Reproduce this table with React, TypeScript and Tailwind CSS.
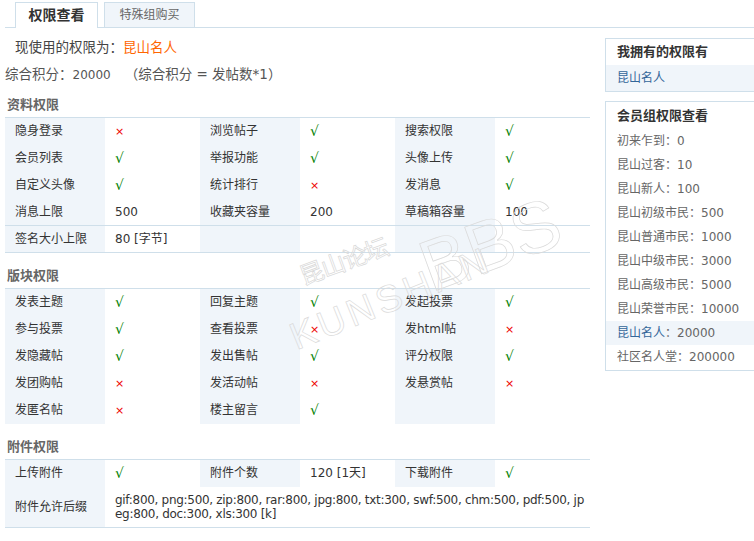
type Cell = string | "yes" | "no" | "";

const font = "font-['DejaVu_Sans','Noto_Sans_CJK_SC',sans-serif]";

const Yes = () => <span className="text-[14px] text-[#008000]">√</span>;
const No = () => <span className="text-[11px] text-[#e00]">×</span>;

const Value = ({ v }: { v: Cell }) => {
  if (v === "yes") return <Yes />;
  if (v === "no") return <No />;
  return <span>{v}</span>;
};

const profileRows: Cell[][] = [
  ["隐身登录", "no", "浏览帖子", "yes", "搜索权限", "yes"],
  ["会员列表", "yes", "举报功能", "yes", "头像上传", "yes"],
  ["自定义头像", "yes", "统计排行", "no", "发消息", "yes"],
  ["消息上限", "500", "收藏夹容量", "200", "草稿箱容量", "100"],
  ["签名大小上限", "80 [字节]", "", "", "", ""],
];

const forumRows: Cell[][] = [
  ["发表主题", "yes", "回复主题", "yes", "发起投票", "yes"],
  ["参与投票", "yes", "查看投票", "no", "发html帖", "no"],
  ["发隐藏帖", "yes", "发出售帖", "yes", "评分权限", "yes"],
  ["发团购帖", "no", "发活动帖", "no", "发悬赏帖", "no"],
  ["发匿名帖", "no", "楼主留言", "yes", "", ""],
];

const groups = [
  ["初来乍到", "0"],
  ["昆山过客", "10"],
  ["昆山新人", "100"],
  ["昆山初级市民", "500"],
  ["昆山普通市民", "1000"],
  ["昆山中级市民", "3000"],
  ["昆山高级市民", "5000"],
  ["昆山荣誉市民", "10000"],
  ["昆山名人", "20000"],
  ["社区名人堂", "200000"],
];

const Row = ({ cells }: { cells: Cell[] }) => (
  <div className="grid grid-cols-[100px_95px_100px_95px_100px_95px] h-[27px] border-b border-[#cfdfea] leading-[26px]">
    {cells.map((c, i) => (
      <div key={i} className={`pl-[10px] ${i % 2 === 0 ? "bg-[#f0f5fa]" : "bg-white"}`}>
        <Value v={c} />
      </div>
    ))}
  </div>
);

const Section = ({ title, first }: { title: string; first?: boolean }) => (
  <div className={`${first ? "mt-[8px]" : "mt-[10px]"} h-[25px] leading-[25px] pl-[2px] font-bold text-[#666] text-[13px]`}>
    {title}
  </div>
);

// faint forum watermark lying over the tables
const Watermark = () => (
  <div className="pointer-events-none absolute left-[280px] top-[180px] w-[280px] h-[150px] select-none">
    <div className="absolute left-[18px] top-[64px] -rotate-[20deg] text-[24px] text-transparent [-webkit-text-stroke:0.7px_#d8d8d8] tracking-[-1px]">
      昆山论坛
    </div>
    <div className="absolute left-[4px] top-[90px] -rotate-[22deg] text-[38px] text-transparent [-webkit-text-stroke:0.7px_#dadada] tracking-[4px] font-['Liberation_Sans',sans-serif]">
      KUNSHAN
    </div>
    <div className="absolute left-[138px] top-[10px] -rotate-[20deg] text-[72px] text-transparent [-webkit-text-stroke:0.7px_#dadada] font-['Liberation_Sans',sans-serif]">
      BBS
    </div>
  </div>
);

export default function App() {
  return (
    <div className={`relative w-[754px] h-[541px] overflow-hidden bg-white text-[12px] text-[#333] ${font}`}>
      {/* tabs */}
      <div className="ml-[5px] h-[28px] border-b border-[#cfdfea] flex items-end pl-[10px] gap-[6px]">
        <div className="w-[83px] h-[26px] -mb-px bg-white border border-b-0 border-[#cfdfea] flex items-center justify-center font-bold text-[14px] text-[#333]">
          权限查看
        </div>
        <div className="w-[91px] h-[25px] bg-[#f0f5fa] border border-b-0 border-[#cfdfea] flex items-center justify-center text-[12px] text-[#666]">
          特殊组购买
        </div>
      </div>

      <div className="flex">
        {/* main */}
        <div className="ml-[5px] w-[585px]">
          <div className="mt-[7px] h-[24px] leading-[24px] pl-[10px] text-[13.5px] text-[#444]">
            现使用的权限为：<span className="text-[#f60]">昆山名人</span>
          </div>
          <div className="mt-[5px] h-[20px] leading-[20px] text-[13.5px] text-[#555]">
            综合积分：<span className="text-[12px]">20000</span>
            <span className="ml-[14px]">（综合积分 = 发帖数*1）</span>
          </div>

          <Section title="资料权限" first />
          <div className="border-t border-[#cfdfea]">
            {profileRows.map((r, i) => (
              <Row key={i} cells={r} />
            ))}
          </div>

          <Section title="版块权限" />
          <div className="border-t border-[#cfdfea]">
            {forumRows.map((r, i) => (
              <Row key={i} cells={r} />
            ))}
          </div>

          <Section title="附件权限" />
          <div className="border-t border-[#cfdfea]">
            <Row cells={["上传附件", "yes", "附件个数", "120 [1天]", "下载附件", "yes"]} />
            <div className="grid grid-cols-[100px_485px] h-[41px] border-b border-[#cfdfea]">
              <div className="pl-[10px] bg-[#f0f5fa] flex items-center">附件允许后缀</div>
              <div className="pl-[10px] pr-[2px] flex items-center leading-[14px] tracking-[-0.3px] break-all">
                gif:800, png:500, zip:800, rar:800, jpg:800, txt:300, swf:500, chm:500, pdf:500, jpeg:800, doc:300, xls:300 [k]
              </div>
            </div>
          </div>
        </div>

        {/* sidebar */}
        <div className="ml-[15px] w-[160px] shrink-0">
          <div className="mt-[10px] border border-[#cfdfea]">
            <div className="h-[26px] leading-[26px] pl-[11px] font-bold text-[13px] text-[#333]">我拥有的权限有</div>
            <div className="h-[26px] leading-[26px] pl-[11px] bg-[#f0f5fa] text-[#369]">昆山名人</div>
          </div>
          <div className="mt-[9px] border border-[#cfdfea] pb-[1px]">
            <div className="h-[27px] leading-[27px] pl-[11px] font-bold text-[13px] text-[#333]">会员组权限查看</div>
            {groups.map(([name, score]) => {
              const on = name === "昆山名人";
              return (
                <div
                  key={name}
                  className={`h-[24px] leading-[24px] pl-[11px] text-[#666] ${on ? "bg-[#f0f5fa]" : ""}`}
                >
                  <span className={on ? "text-[#369]" : ""}>{name}</span>：{score}
                </div>
              );
            })}
          </div>
        </div>
      </div>

      <Watermark />
    </div>
  );
}
